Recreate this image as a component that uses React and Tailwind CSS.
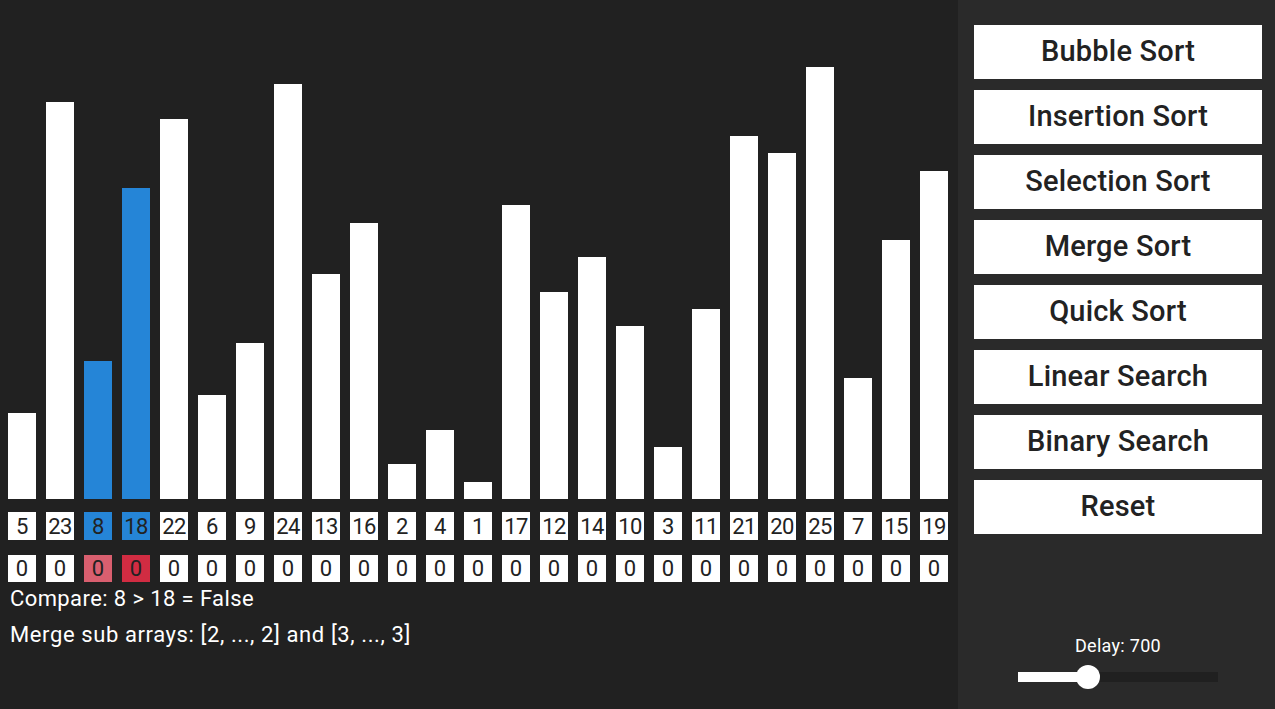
const VALUES = [5, 23, 8, 18, 22, 6, 9, 24, 13, 16, 2, 4, 1, 17, 12, 14, 10, 3, 11, 21, 20, 25, 7, 15, 19];
const ACTIVE = [2, 3];
const UNIT = 17.28;

const BUTTONS = [
	'Bubble Sort',
	'Insertion Sort',
	'Selection Sort',
	'Merge Sort',
	'Quick Sort',
	'Linear Search',
	'Binary Search',
	'Reset',
];

const font = { fontFamily: 'Roboto, "Noto Sans", sans-serif' };

function Bars() {
	return (
		<div className="h-[499px] flex items-end gap-[10px] pl-[8px]">
			{VALUES.map((v, i) => (
				<div
					key={i}
					className={'w-[28px] shrink-0 ' + (ACTIVE.includes(i) ? 'bg-[#2585d7]' : 'bg-white')}
					style={{ height: Math.round(v * UNIT) }}
				/>
			))}
		</div>
	);
}

function ValueRow() {
	return (
		<div className="flex gap-[10px] pl-[8px] mt-[13px]">
			{VALUES.map((v, i) => (
				<div
					key={i}
					className={
						'w-[28px] h-[28px] shrink-0 flex items-center justify-center text-[22px] text-[#222] tracking-[-0.5px] ' +
						(ACTIVE.includes(i) ? 'bg-[#2585d7]' : 'bg-white')
					}
				>
					{v}
				</div>
			))}
		</div>
	);
}

function CountRow() {
	return (
		<div className="flex gap-[10px] pl-[8px] mt-[15px]">
			{VALUES.map((_, i) => {
				let bg = 'bg-white';
				if (i === 2) bg = 'bg-[#d95f6f]';
				if (i === 3) bg = 'bg-[#d12c42]';
				return (
					<div
						key={i}
						className={'w-[28px] h-[27px] shrink-0 flex items-center justify-center text-[22px] text-[#222] ' + bg}
					>
						0
					</div>
				);
			})}
		</div>
	);
}

function Slider() {
	return (
		<div className="flex flex-col items-center">
			<p className="text-[18px] text-white leading-[22px] tracking-[0.3px]">Delay: 700</p>
			<div className="relative w-[200px] h-[10px] bg-[#202020] mt-[15px]">
				<div className="h-full w-[70px] bg-white" />
				<div className="absolute left-[58px] top-[-7px] w-[24px] h-[24px] rounded-full bg-white" />
			</div>
		</div>
	);
}

export default function App() {
	return (
		<div className="w-[1275px] h-[709px] flex overflow-hidden" style={font}>
			{/* Visualizer */}
			<div className="w-[958px] h-full bg-[#212121] flex flex-col">
				<Bars />
				<ValueRow />
				<CountRow />
				<p className="text-white text-[22px] leading-[24px] tracking-[0.4px] pl-[10px] mt-[5px]">Compare: 8 &gt; 18 = False</p>
				<p className="text-white text-[22px] leading-[24px] tracking-[0.6px] pl-[10px] mt-[12px]">Merge sub arrays: [2, ..., 2] and [3, ..., 3]</p>
			</div>

			{/* Controls */}
			<div className="flex-1 h-full bg-[#2a2a2a] flex flex-col pt-[25px] pl-[16px] pr-[13px]">
				<div className="flex flex-col gap-[11px]">
					{BUTTONS.map((b) => (
						<button
							key={b}
							className="w-[288px] h-[54px] bg-white text-[#222] text-[29px] font-medium tracking-[0.2px] flex items-center justify-center cursor-pointer"
						>
							{b}
						</button>
					))}
				</div>
				<div className="mt-[101px]">
					<Slider />
				</div>
			</div>
		</div>
	);
}
